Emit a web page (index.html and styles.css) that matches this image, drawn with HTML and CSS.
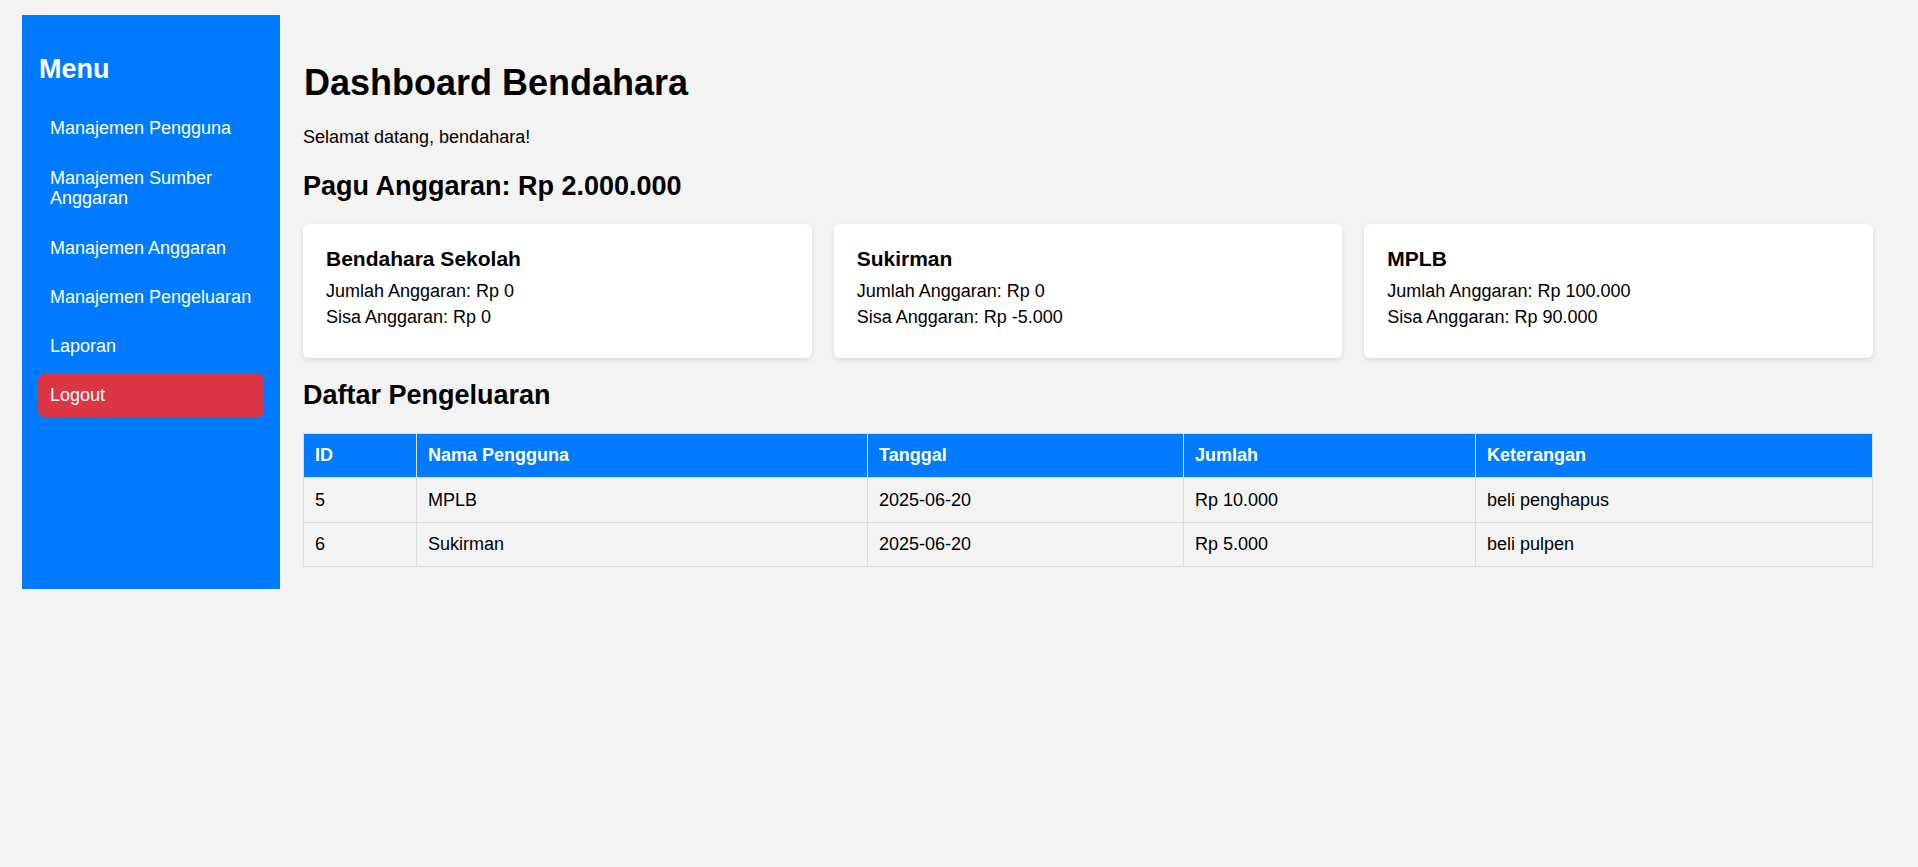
FILE: index.html
```html
<!DOCTYPE html>
<html lang="id">
<head>
<meta charset="utf-8">
<title>Dashboard Bendahara</title>
<link rel="stylesheet" href="styles.css">
</head>
<body>
<div class="layout">
  <aside class="sidebar">
    <h2 class="sidebar-title">Menu</h2>
    <nav class="menu">
      <a class="menu-link" href="#">Manajemen Pengguna</a>
      <a class="menu-link" href="#">Manajemen Sumber Anggaran</a>
      <a class="menu-link" href="#">Manajemen Anggaran</a>
      <a class="menu-link" href="#">Manajemen Pengeluaran</a>
      <a class="menu-link" href="#">Laporan</a>
      <a class="menu-link logout" href="#">Logout</a>
    </nav>
  </aside>
  <main class="main">
    <h1 class="page-title">Dashboard Bendahara</h1>
    <p class="welcome">Selamat datang, bendahara!</p>
    <h2 class="section-title">Pagu Anggaran: Rp 2.000.000</h2>
    <div class="cards">
      <div class="card">
        <h3 class="card-title">Bendahara Sekolah</h3>
        <p class="card-line">Jumlah Anggaran: Rp 0</p>
        <p class="card-line">Sisa Anggaran: Rp 0</p>
      </div>
      <div class="card">
        <h3 class="card-title">Sukirman</h3>
        <p class="card-line">Jumlah Anggaran: Rp 0</p>
        <p class="card-line">Sisa Anggaran: Rp -5.000</p>
      </div>
      <div class="card">
        <h3 class="card-title">MPLB</h3>
        <p class="card-line">Jumlah Anggaran: Rp 100.000</p>
        <p class="card-line">Sisa Anggaran: Rp 90.000</p>
      </div>
    </div>
    <h2 class="section-title">Daftar Pengeluaran</h2>
    <table class="data-table">
      <colgroup>
        <col class="col-id">
        <col class="col-nama">
        <col class="col-tanggal">
        <col class="col-jumlah">
        <col class="col-ket">
      </colgroup>
      <thead>
        <tr>
          <th>ID</th>
          <th>Nama Pengguna</th>
          <th>Tanggal</th>
          <th>Jumlah</th>
          <th>Keterangan</th>
        </tr>
      </thead>
      <tbody>
        <tr>
          <td>5</td>
          <td>MPLB</td>
          <td>2025-06-20</td>
          <td>Rp 10.000</td>
          <td>beli penghapus</td>
        </tr>
        <tr>
          <td>6</td>
          <td>Sukirman</td>
          <td>2025-06-20</td>
          <td>Rp 5.000</td>
          <td>beli pulpen</td>
        </tr>
      </tbody>
    </table>
  </main>
</div>
</body>
</html>
```

FILE: styles.css
```css
html, body {
  margin: 0;
  padding: 0;
}

body {
  background: #f3f3f3;
  font-family: "Liberation Sans", Arial, sans-serif;
  font-size: 18px;
  color: #000;
}

.layout {
  display: flex;
  align-items: stretch;
  padding: 15px 22px 0 22px;
}

.sidebar {
  flex: 0 0 258px;
  box-sizing: border-box;
  background: #007bff;
  color: #fff;
  padding: 17px 16px 16px 16px;
}

.sidebar-title {
  font-size: 27px;
  font-weight: bold;
  margin: 22.4px 0 22px 1px;
  line-height: 31px;
}

.menu {
  display: flex;
  flex-direction: column;
  gap: 6.5px;
}

.menu-link {
  display: block;
  color: #fff;
  text-decoration: none;
  padding: 11px 12px;
  line-height: 20.7px;
  border-radius: 6px;
}

.logout {
  background: #dc3545;
}

.main {
  flex: 1;
  min-width: 0;
  padding: 23px 23px 22px 23px;
}

.page-title {
  font-size: 36px;
  font-weight: bold;
  margin: 24px 0 24px 1px;
  line-height: 41.4px;
}

.welcome {
  margin: 0 0 22.4px 0;
  line-height: 20.7px;
}

.section-title {
  font-size: 27px;
  font-weight: bold;
  margin: 22.4px 0 22px 0;
  line-height: 31px;
}

.cards {
  display: grid;
  grid-template-columns: repeat(3, 1fr);
  gap: 22px;
}

.card {
  background: #fff;
  border-radius: 6px;
  box-shadow: 0 2px 5px rgba(0, 0, 0, 0.1);
  padding: 23px 23px 29px 23px;
  height: 134px;
  box-sizing: border-box;
}

.card-title {
  font-size: 21px;
  font-weight: bold;
  margin: 0 0 10.8px 0;
  line-height: 24px;
}

.card-line {
  margin: 0 0 5px 0;
  line-height: 20.7px;
}

.data-table {
  width: 100%;
  border-collapse: collapse;
  table-layout: fixed;
}

.col-id { width: 113px; }
.col-nama { width: 451px; }
.col-tanggal { width: 316px; }
.col-jumlah { width: 292px; }

.data-table th,
.data-table td {
  border: 1px solid #dcdcdc;
  padding: 11.4px 11px;
  text-align: left;
  line-height: 20.7px;
}

.data-table th {
  background: #007bff;
  color: #fff;
  font-weight: bold;
}
```
